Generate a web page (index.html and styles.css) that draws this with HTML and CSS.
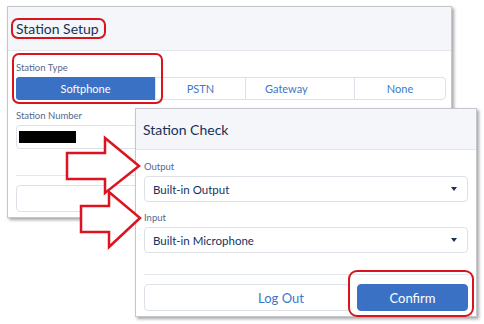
FILE: index.html
```
<!DOCTYPE html>
<html>
<head>
    <title>Station Setup</title>
    <link rel="stylesheet" href="styles.css">
</head>
<body>

<div class="stage">

    <div class="panel setup">
        <div class="panel-head">
            <h2 class="panel-title">Station Setup</h2>
        </div>
        <div class="panel-body">
            <div class="label">Station Type</div>
            <div class="segments">
                <div class="segment active">Softphone</div>
                <div class="segment">PSTN</div>
                <div class="segment">Gateway</div>
                <div class="segment">None</div>
            </div>

            <div class="label label-gap">Station Number</div>
            <div class="field">
                <span class="redacted"></span>
            </div>

            <div class="divider"></div>
            <div class="btn-row">
                <div class="btn"></div>
            </div>
        </div>
    </div>

    <div class="panel check">
        <div class="panel-head">
            <h2 class="panel-title">Station Check</h2>
        </div>
        <div class="panel-body">
            <div class="label">Output</div>
            <div class="select">Built-in Output <span class="caret"></span></div>

            <div class="label label-gap">Input</div>
            <div class="select">Built-in Microphone <span class="caret"></span></div>

            <div class="divider"></div>
            <div class="btn-row">
                <div class="btn btn-logout">Log Out</div>
                <div class="btn btn-primary">Confirm</div>
            </div>
        </div>
    </div>

    <!-- callouts drawn over the screenshot -->
    <div class="ring ring-title"></div>
    <div class="ring ring-type"></div>
    <div class="ring ring-confirm"></div>

    <svg class="arrows" width="484" height="324" viewBox="0 0 484 324">
        <polygon points="67,153 105,153 105,138 139,166 105,193 105,179 67,179"/>
        <polygon points="81,206 109,206 109,192 140,218 109,247 109,232 81,232"/>
    </svg>

</div>

</body>
</html>
```

FILE: styles.css
```
body { margin: 0; background: #fff; font-family: Lato, "Open Sans", sans-serif; color: #16325c; }
.stage { position: relative; width: 484px; height: 324px; overflow: hidden; }

.panel { background: #fff; border: 1px solid #c4c7cc; box-shadow: 2px 2px 3px rgba(0, 0, 0, 0.35); box-sizing: border-box; }
.panel-head { background: #f4f6f9; border-bottom: 1px solid #e2e5ea; display: flex; align-items: center; }
.panel-title { margin: 0; font-weight: normal; color: #16325c; }

.setup { margin: 6px 0 0 7px; width: 445px; height: 212px; }
.setup .panel-head { height: 43px; padding-left: 8px; }
.setup .panel-title { font-size: 14px; }
.setup .panel-body { padding: 11px 5px 0 8px; }

.check { position: absolute; left: 135px; top: 108px; width: 342px; height: 209px; }
.check .panel-head { height: 40px; padding-left: 7px; }
.check .panel-title { font-size: 14px; }
.check .panel-body { padding: 11px 8px 0 8px; }

.label { font-size: 9.5px; line-height: 12px; color: #54698d; margin-bottom: 3px; }
.label-gap { margin-top: 10px; }

.segments { display: flex; height: 23px; border: 1px solid #dde1e7; border-radius: 4px; box-sizing: border-box; }
.segment { flex: 1; display: flex; align-items: center; justify-content: center; font-size: 11px; color: #3a78c8; border-left: 1px solid #dde1e7; }
.segment:first-child { border-left: none; }
.segment.active { flex: 0 0 139px; background: #3b71c5; color: #fff; border-radius: 3px 0 0 3px; margin: -1px 0 -1px -1px; }
.segment:nth-child(2) { flex: 0 0 89px; }
.segment:nth-child(3) { flex: 0 0 109px; justify-content: flex-start; padding-left: 19px; box-sizing: border-box; }

.field { height: 24px; border: 1px solid #dde1e7; border-radius: 4px; box-sizing: border-box; display: flex; align-items: center; padding-left: 2px; }
.redacted { display: block; width: 57px; height: 12px; background: #000; }

.select { height: 26px; border: 1px solid #dde1e7; border-radius: 4px; box-sizing: border-box; display: flex; align-items: center; padding: 0 10px 0 8px; font-size: 11.5px; color: #16325c; }
.caret { margin-left: auto; width: 0; height: 0; border-left: 3px solid transparent; border-right: 3px solid transparent; border-top: 4px solid #16325c; }

.divider { border-top: 1px solid #e4e7ec; }
.setup .divider { margin-top: 26px; }
.check .divider { margin-top: 21px; }

.btn-row { display: flex; gap: 7px; margin-top: 9px; }
.btn { height: 27px; border: 1px solid #dde1e7; border-radius: 4px; box-sizing: border-box; display: flex; align-items: center; justify-content: center; font-size: 13px; }
.setup .btn { flex: 1; }
.btn-logout { flex: 1; color: #3a78c8; padding-left: 68px; }
.btn-primary { flex: 0 0 111px; background: #3b71c5; border-color: #3b71c5; color: #fff; }

.ring { position: absolute; border: 2px solid #d9141e; border-radius: 7px; box-sizing: border-box; }
.ring-title { left: 11px; top: 18px; width: 95px; height: 21px; }
.ring-type { left: 12px; top: 53px; width: 151px; height: 51px; }
.ring-confirm { left: 348px; top: 270px; width: 126px; height: 47px; border-radius: 9px; }

.arrows { position: absolute; left: 0; top: 0; }
.arrows polygon { fill: #fff; stroke: #dc1420; stroke-width: 2.5; stroke-linejoin: miter; }
```
